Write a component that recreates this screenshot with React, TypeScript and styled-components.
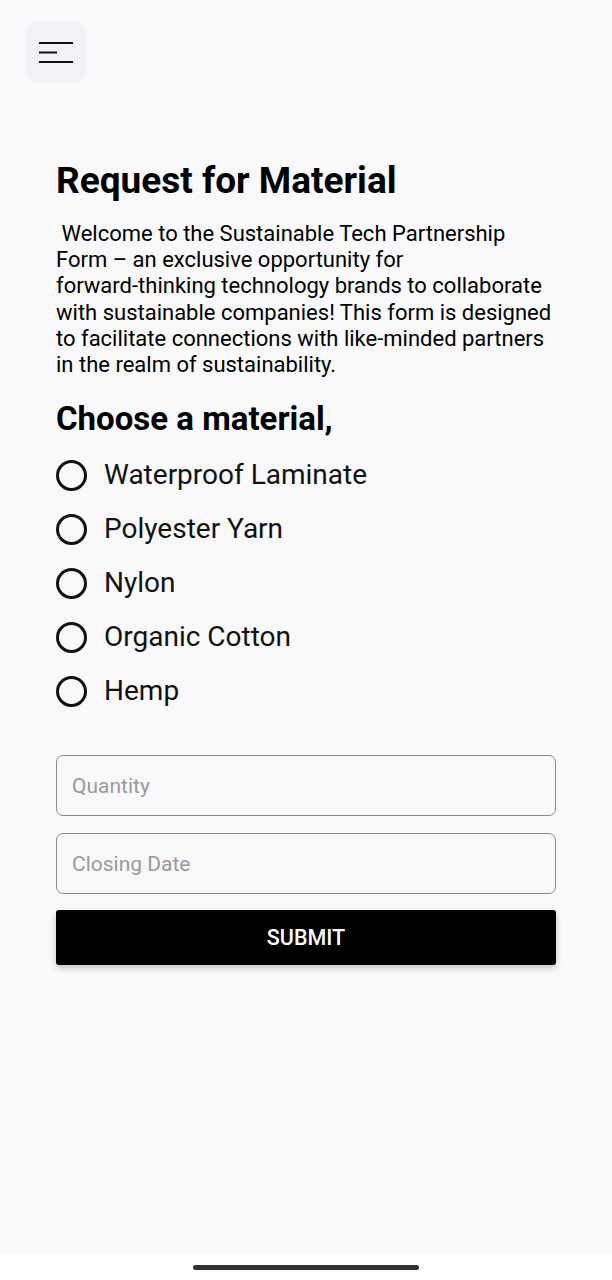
import React, { useState } from "react";
import styled, { createGlobalStyle } from "styled-components";

const GlobalStyle = createGlobalStyle`
  html, body {
    margin: 0;
    padding: 0;
    background: #f9f9fb;
  }
  body {
    font-family: Roboto, "Noto Sans", "Liberation Sans", sans-serif;
    color: #000;
  }
  * { box-sizing: border-box; }
`;

const Screen = styled.div`
  width: 612px;
  height: 1280px;
  display: flex;
  flex-direction: column;
  background: #f9f9fb;
`;

const Main = styled.div`
  flex: 1;
  display: flex;
  flex-direction: column;
`;

const Header = styled.header`
  padding: 21px 0 0 25px;
  display: flex;
`;

const MenuButton = styled.button`
  width: 62px;
  height: 62px;
  border: none;
  border-radius: 14px;
  background: #f1f2f5;
  display: flex;
  align-items: center;
  justify-content: center;
  padding: 0;
  cursor: pointer;
`;

const Content = styled.main`
  margin: 77px 0 0 56px;
  width: 502px;
  display: flex;
  flex-direction: column;
`;

const Title = styled.h1`
  margin: 0;
  font-size: 37px;
  line-height: 42px;
  font-weight: 700;
`;

const Intro = styled.p`
  margin: 19px 0 0;
  font-size: 22px;
  line-height: 26.2px;
  font-weight: 400;
  white-space: pre-wrap;
`;

const SectionTitle = styled.h2`
  margin: 22px 0 0;
  font-size: 33px;
  line-height: 38px;
  font-weight: 700;
`;

const Options = styled.div`
  margin-top: 10px;
  display: flex;
  flex-direction: column;
`;

const OptionRow = styled.label`
  height: 54px;
  display: flex;
  align-items: center;
  gap: 17px;
  cursor: pointer;
`;

const RadioCircle = styled.span<{ $checked: boolean }>`
  width: 31px;
  height: 31px;
  border-radius: 50%;
  border: 3px solid #111;
  display: flex;
  align-items: center;
  justify-content: center;
  flex-shrink: 0;
  &::after {
    content: "";
    width: 15px;
    height: 15px;
    border-radius: 50%;
    background: #111;
    display: ${(p) => (p.$checked ? "block" : "none")};
  }
`;

const OptionLabel = styled.span`
  font-size: 28px;
  line-height: 32px;
  font-weight: 400;
  color: #111;
`;

const Fields = styled.div`
  margin-top: 37px;
  display: flex;
  flex-direction: column;
  gap: 17px;
`;

const Input = styled.input`
  width: 500px;
  height: 61px;
  border: 1.5px solid #8a8a8a;
  border-radius: 7px;
  background: transparent;
  padding: 0 15px;
  font-family: Roboto, "Noto Sans", sans-serif;
  font-size: 21px;
  color: #111;
  outline: none;
  &::placeholder {
    color: #9a9a9a;
  }
`;

const SubmitButton = styled.button`
  margin-top: 16px;
  width: 500px;
  height: 55px;
  border: none;
  border-radius: 3px;
  background: #000;
  color: #fff;
  font-family: Roboto, "Noto Sans", sans-serif;
  font-size: 21.5px;
  font-weight: 500;
  box-shadow: 0 3px 6px rgba(0, 0, 0, 0.22);
  cursor: pointer;
`;

const NavBar = styled.div`
  height: 26px;
  background: #ffffff;
  display: flex;
  justify-content: center;
  align-items: center;
`;

const NavHandle = styled.div`
  width: 226px;
  height: 5px;
  border-radius: 3px;
  background: #333;
  margin-top: 1px;
`;

const MenuIcon = () => (
  <svg width="62" height="62" viewBox="0 0 62 62" fill="none">
    <line x1="14" y1="22" x2="48" y2="22" stroke="#111" strokeWidth="2" />
    <line x1="14" y1="31.5" x2="32" y2="31.5" stroke="#111" strokeWidth="2" />
    <line x1="14" y1="41" x2="48" y2="41" stroke="#111" strokeWidth="2" />
  </svg>
);

const materials = [
  "Waterproof Laminate",
  "Polyester Yarn",
  "Nylon",
  "Organic Cotton",
  "Hemp",
];

const intro =
  " Welcome to the Sustainable Tech Partnership Form – an exclusive opportunity for forward-\u2060thinking technology brands to collaborate with sustainable companies! This form is designed to facilitate connections with like-\u2060minded partners in the realm of sustainability.";

export default function App() {
  const [selected, setSelected] = useState<string | null>(null);
  return (
    <>
      <GlobalStyle />
      <Screen>
        <Main>
          <Header>
            <MenuButton aria-label="Menu">
              <MenuIcon />
            </MenuButton>
          </Header>
          <Content>
            <Title>Request for Material</Title>
            <Intro>{intro}</Intro>
            <SectionTitle>Choose a material,</SectionTitle>
            <Options>
              {materials.map((m) => (
                <OptionRow key={m} onClick={() => setSelected(m)}>
                  <RadioCircle $checked={selected === m} />
                  <OptionLabel>{m}</OptionLabel>
                </OptionRow>
              ))}
            </Options>
            <Fields>
              <Input placeholder="Quantity" />
              <Input placeholder="Closing Date" />
            </Fields>
            <SubmitButton>SUBMIT</SubmitButton>
          </Content>
        </Main>
        <NavBar>
          <NavHandle />
        </NavBar>
      </Screen>
    </>
  );
}
